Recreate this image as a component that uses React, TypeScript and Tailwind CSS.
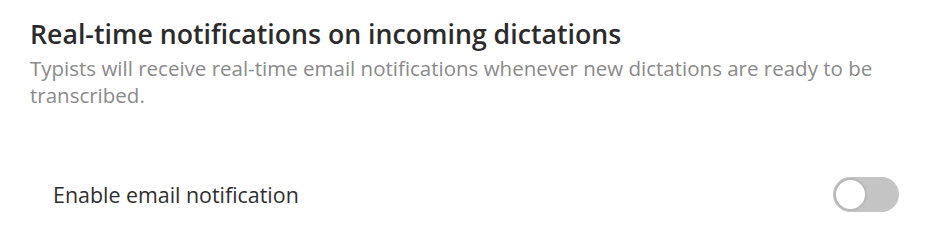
import { useState } from "react";

export default function App() {
  const [enabled, setEnabled] = useState(false);

  return (
    <div
      className="w-[936px] h-[237px] bg-white text-[#2b2b2b]"
      style={{ fontFamily: '"Open Sans", "Noto Sans", sans-serif' }}
    >
      <div className="pl-[30px] pt-[17px]">
        <h2 className="text-[26.7px] leading-[34px] font-semibold text-[#2b2b2b]">
          Real-time notifications on incoming dictations
        </h2>
        <p className="mt-[4px] w-[870px] text-[20.5px] leading-[27px] text-[#8a8a8a]">
          Typists will receive real-time email notifications whenever new dictations are ready to be
          transcribed.
        </p>
      </div>

      <div className="flex items-center justify-between pl-[53px] pr-[37px] mt-[68px]">
        <span className="text-[21.4px] leading-[35px] text-[#2e2e2e]">Enable email notification</span>
        <button
          type="button"
          role="switch"
          aria-checked={enabled}
          onClick={() => setEnabled(!enabled)}
          className={
            "relative flex h-[35px] w-[66px] items-center rounded-full p-[1px] transition-colors " +
            (enabled ? "bg-[#0f7bd6] justify-end" : "bg-[#c4c4c4] justify-start")
          }
        >
          <span className="block h-[33px] w-[33px] rounded-full border-[2px] border-[#b8b8b8] bg-white" />
        </button>
      </div>
    </div>
  );
}
